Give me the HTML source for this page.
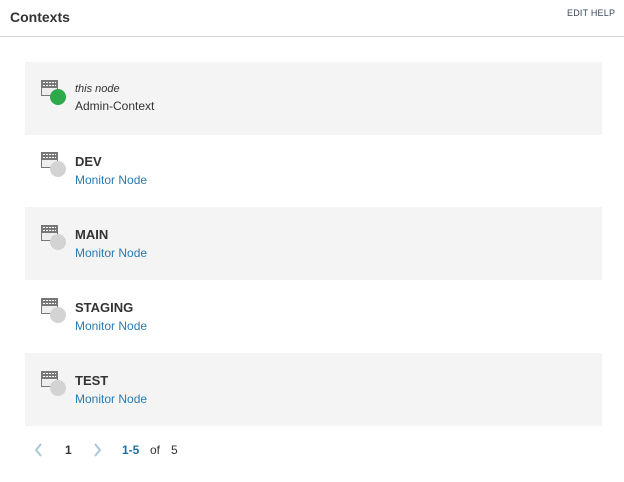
<!DOCTYPE html>
<html><head><style>
body{margin:0;width:624px;height:482px;background:#fff;font-family:"Liberation Sans",sans-serif;position:relative;overflow:hidden}
.h{position:absolute;left:10px;top:9px;font-size:14px;font-weight:bold;color:#333}
.eh{position:absolute;left:567px;top:8px;font-size:9px;color:#3a4a5a;letter-spacing:0.2px}
.line{position:absolute;left:0;top:36px;width:624px;height:1px;background:#d4d4d4}
.row{position:absolute;left:25px;width:577px;height:73px}
.g{background:#f4f4f4}
.ic{position:absolute;left:15px;top:17px}
.t1{position:absolute;left:50px;top:20px;font-size:13px;font-weight:bold;color:#333}
.t2{position:absolute;left:50px;top:39px;font-size:12px;color:#2a7ab0}
.it{position:absolute;left:50px;top:21px;font-size:11px;font-style:italic;color:#333}
.ad{position:absolute;left:50px;top:37px;font-size:12px;color:#333}
.pg{position:absolute;top:443px;font-size:12px}
</style></head><body>
<div class="h">Contexts</div>
<div class="eh">EDIT HELP</div>
<div class="line"></div>

<div class="row g" style="top:62px">
<svg class="ic" width="28" height="28" viewBox="0 0 28 28"><rect x="1.5" y="1.5" width="16" height="15" fill="#eee" stroke="#777"/><rect x="1" y="1" width="17" height="8" fill="#777"/><path d="M3 3.5h13M3 6.5h13" stroke="#fff" stroke-dasharray="2 1" stroke-width="1"/><circle cx="18" cy="18" r="8" fill="#2ea94b"/></svg>
<div class="it">this node</div><div class="ad">Admin-Context</div></div>

<div class="row" style="top:134px">
<svg class="ic" width="28" height="28" viewBox="0 0 28 28"><rect x="1.5" y="1.5" width="16" height="15" fill="#eee" stroke="#777"/><rect x="1" y="1" width="17" height="8" fill="#777"/><path d="M3 3.5h13M3 6.5h13" stroke="#fff" stroke-dasharray="2 1"/><circle cx="18" cy="18" r="8" fill="#d3d3d3"/></svg>
<div class="t1">DEV</div><div class="t2">Monitor Node</div></div>

<div class="row g" style="top:207px">
<svg class="ic" width="28" height="28" viewBox="0 0 28 28"><rect x="1.5" y="1.5" width="16" height="15" fill="#eee" stroke="#777"/><rect x="1" y="1" width="17" height="8" fill="#777"/><path d="M3 3.5h13M3 6.5h13" stroke="#fff" stroke-dasharray="2 1"/><circle cx="18" cy="18" r="8" fill="#d3d3d3"/></svg>
<div class="t1">MAIN</div><div class="t2">Monitor Node</div></div>

<div class="row" style="top:280px">
<svg class="ic" width="28" height="28" viewBox="0 0 28 28"><rect x="1.5" y="1.5" width="16" height="15" fill="#eee" stroke="#777"/><rect x="1" y="1" width="17" height="8" fill="#777"/><path d="M3 3.5h13M3 6.5h13" stroke="#fff" stroke-dasharray="2 1"/><circle cx="18" cy="18" r="8" fill="#d3d3d3"/></svg>
<div class="t1">STAGING</div><div class="t2">Monitor Node</div></div>

<div class="row g" style="top:353px">
<svg class="ic" width="28" height="28" viewBox="0 0 28 28"><rect x="1.5" y="1.5" width="16" height="15" fill="#eee" stroke="#777"/><rect x="1" y="1" width="17" height="8" fill="#777"/><path d="M3 3.5h13M3 6.5h13" stroke="#fff" stroke-dasharray="2 1"/><circle cx="18" cy="18" r="8" fill="#d3d3d3"/></svg>
<div class="t1">TEST</div><div class="t2">Monitor Node</div></div>

<svg style="position:absolute;left:34px;top:443px" width="10" height="14"><path d="M7 1L2 7l5 6" stroke="#a9c8d8" stroke-width="2" fill="none"/></svg>
<div class="pg" style="left:65px;font-weight:bold;color:#333">1</div>
<svg style="position:absolute;left:92px;top:443px" width="10" height="14"><path d="M3 1l5 6-5 6" stroke="#a9c8d8" stroke-width="2" fill="none"/></svg>
<div class="pg" style="left:122px;font-weight:bold;color:#1f6fa0">1-5</div>
<div class="pg" style="left:150px;color:#333">of</div>
<div class="pg" style="left:171px;color:#333">5</div>
</body></html>
